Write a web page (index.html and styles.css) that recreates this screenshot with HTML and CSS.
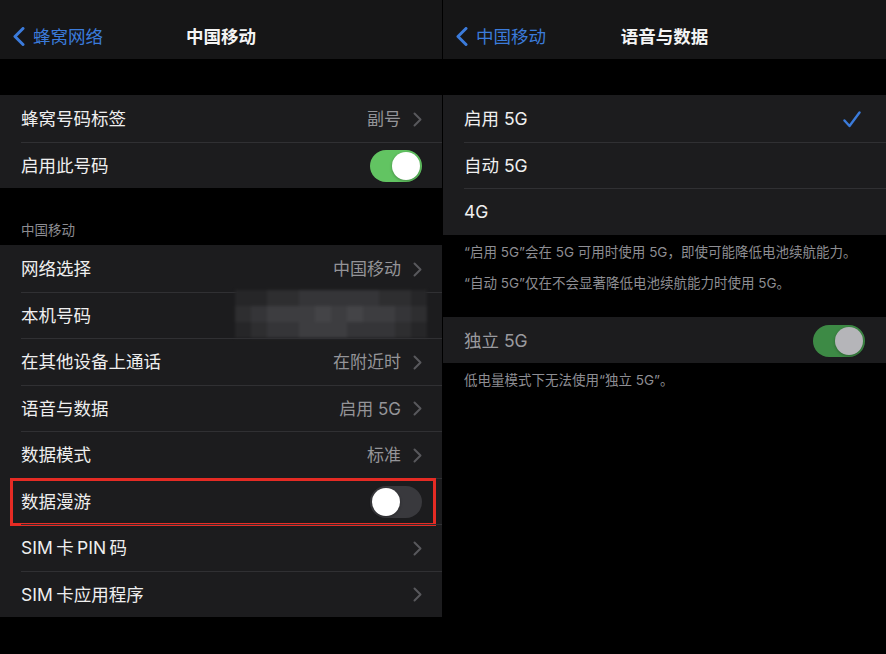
FILE: index.html
```html
<!DOCTYPE html>
<html lang="zh-CN">
<head>
<meta charset="utf-8">
<title>中国移动 / 语音与数据</title>
<link rel="stylesheet" href="styles.css">
</head>
<body>
<div class="screen">
  <section class="panel panel-left">
    <header class="nav">
      <a class="back">
        <svg class="back-chev" width="12" height="19" viewBox="0 0 12 19"><polyline points="10,1.5 2,9.5 10,17.5"/></svg>
        <span>蜂窝网络</span>
      </a>
      <h1 class="title">中国移动</h1>
      <span></span>
    </header>
    <div class="spacer"></div>
    <ul class="group">
      <li class="row"><div class="cell"><span class="label">蜂窝号码标签</span><span class="value">副号</span><svg class="chev" width="9" height="15" viewBox="0 0 9 15"><polyline points="1.5,1.5 7.5,7.5 1.5,13.5"/></svg></div></li>
      <li class="row"><div class="cell"><span class="label">启用此号码</span><span class="toggle on"><span class="knob"></span></span></div></li>
    </ul>
    <div class="section-head">中国移动</div>
    <ul class="group">
      <li class="row"><div class="cell"><span class="label">网络选择</span><span class="value">中国移动</span><svg class="chev" width="9" height="15" viewBox="0 0 9 15"><polyline points="1.5,1.5 7.5,7.5 1.5,13.5"/></svg></div></li>
      <li class="row row-number"><div class="cell"><span class="label">本机号码</span></div>
        <div class="mosaic">
          <i class="t0"></i><i class="t0"></i><i class="t1"></i><i class="t1"></i><i class="t2"></i><i class="t2"></i><i class="t2"></i><i class="t2"></i><i class="t2"></i><i class="t1"></i><i class="t1"></i><i class="t0"></i>
          <i class="t1"></i><i class="t2"></i><i class="t3"></i><i class="t3"></i><i class="t3"></i><i class="t4"></i><i class="t3"></i><i class="t4"></i><i class="t3"></i><i class="t3"></i><i class="t2"></i><i class="t1"></i>
          <i class="t0"></i><i class="t1"></i><i class="t2"></i><i class="t2"></i><i class="t3"></i><i class="t3"></i><i class="t3"></i><i class="t2"></i><i class="t2"></i><i class="t2"></i><i class="t1"></i><i class="t0"></i>
        </div>
      </li>
      <li class="row"><div class="cell"><span class="label">在其他设备上通话</span><span class="value">在附近时</span><svg class="chev" width="9" height="15" viewBox="0 0 9 15"><polyline points="1.5,1.5 7.5,7.5 1.5,13.5"/></svg></div></li>
      <li class="row"><div class="cell"><span class="label">语音与数据</span><span class="value">启用 5G</span><svg class="chev" width="9" height="15" viewBox="0 0 9 15"><polyline points="1.5,1.5 7.5,7.5 1.5,13.5"/></svg></div></li>
      <li class="row"><div class="cell"><span class="label">数据模式</span><span class="value">标准</span><svg class="chev" width="9" height="15" viewBox="0 0 9 15"><polyline points="1.5,1.5 7.5,7.5 1.5,13.5"/></svg></div></li>
      <li class="row row-marked"><div class="cell"><span class="label">数据漫游</span><span class="toggle off"><span class="knob"></span></span></div></li>
      <li class="row"><div class="cell"><span class="label tight">SIM 卡 PIN 码</span><svg class="chev" width="9" height="15" viewBox="0 0 9 15"><polyline points="1.5,1.5 7.5,7.5 1.5,13.5"/></svg></div></li>
      <li class="row"><div class="cell"><span class="label tight">SIM 卡应用程序</span><svg class="chev" width="9" height="15" viewBox="0 0 9 15"><polyline points="1.5,1.5 7.5,7.5 1.5,13.5"/></svg></div></li>
    </ul>
  </section>

  <section class="panel panel-right">
    <header class="nav">
      <a class="back">
        <svg class="back-chev" width="12" height="19" viewBox="0 0 12 19"><polyline points="10,1.5 2,9.5 10,17.5"/></svg>
        <span>中国移动</span>
      </a>
      <h1 class="title">语音与数据</h1>
      <span></span>
    </header>
    <div class="spacer"></div>
    <ul class="group group-right">
      <li class="row"><div class="cell"><span class="label">启用 5G</span><svg class="check" width="18" height="17" viewBox="0 0 18 17"><polyline points="1.5,9.5 6.5,15 16.5,1.5"/></svg></div></li>
      <li class="row"><div class="cell"><span class="label">自动 5G</span></div></li>
      <li class="row"><div class="cell"><span class="label">4G</span></div></li>
    </ul>
    <div class="footer footer-first">
      <p>“启用 5G”会在 5G 可用时使用 5G，即使可能降低电池续航能力。</p>
      <p>“自动 5G”仅在不会显著降低电池续航能力时使用 5G。</p>
    </div>
    <ul class="group group-right">
      <li class="row row-disabled"><div class="cell"><span class="label">独立 5G</span><span class="toggle dim"><span class="knob"></span></span></div></li>
    </ul>
    <div class="footer">
      <p>低电量模式下无法使用“独立 5G”。</p>
    </div>
  </section>
</div>
</body>
</html>
```

FILE: styles.css
```css
* { box-sizing: border-box; }

html, body {
  margin: 0;
  padding: 0;
  background: #000;
}

body {
  font-family: Inter, "Noto Sans CJK SC", sans-serif;
  color: #f2f2f2;
  width: 886px;
  height: 654px;
  overflow: hidden;
}

.screen {
  display: flex;
  gap: 1px;
  height: 654px;
}

.panel {
  display: flex;
  flex-direction: column;
}

.panel-left { width: 442px; }
.panel-right { width: 443px; }

/* nav bar */
.nav {
  height: 59px;
  background: #161617;
  display: grid;
  grid-template-columns: 1fr auto 1fr;
  align-items: center;
  padding-top: 14px;
}

.back {
  display: flex;
  align-items: center;
  gap: 8px;
  padding-left: 13px;
  color: #3b7bdb;
  font-size: 17.5px;
  line-height: 22px;
}

.back-chev polyline {
  fill: none;
  stroke: #3b7bdb;
  stroke-width: 3;
  stroke-linecap: round;
  stroke-linejoin: round;
}

.title {
  margin: 0;
  font-size: 17.5px;
  line-height: 22px;
  font-weight: 600;
  color: #f4f4f4;
}

.spacer { height: 36px; }

/* groups & rows */
.group {
  list-style: none;
  margin: 0;
  padding: 0;
  background: #1c1c1e;
}

.row {
  position: relative;
  height: 46.5px;
  display: flex;
  padding-left: 21px;
}

.cell {
  flex: 1;
  display: flex;
  align-items: center;
  padding-top: 1px;
  padding-right: 20px;
  border-top: 1px solid #303033;
}

.row:first-child .cell { border-top: none; padding-top: 2px; }

.group-right .cell { padding-right: 21px; }

.label {
  flex: 1;
  font-size: 17.5px;
  line-height: 22px;
  color: #efefef;
}

.label.tight { word-spacing: -1.5px; }

.value {
  font-size: 17px;
  line-height: 22px;
  color: #949498;
  margin-right: 12px;
}

.chev polyline {
  fill: none;
  stroke: #58585c;
  stroke-width: 2;
  stroke-linecap: round;
  stroke-linejoin: round;
}

.check { margin-right: 4px; }

.check polyline {
  fill: none;
  stroke: #3b7bdb;
  stroke-width: 2.4;
  stroke-linecap: round;
  stroke-linejoin: round;
}

/* toggles */
.toggle {
  width: 52px;
  height: 32px;
  border-radius: 16px;
  padding: 2px;
  display: flex;
}

.toggle .knob {
  width: 28px;
  height: 28px;
  border-radius: 50%;
  background: #fff;
  box-shadow: 0 1px 3px rgba(0, 0, 0, 0.3);
}

.toggle.on { background: #62c462; justify-content: flex-end; }
.toggle.off { background: #39393d; justify-content: flex-start; }
.toggle.dim { background: #3d8a45; justify-content: flex-end; }
.toggle.dim .knob { background: #b5b5b9; }

.row-disabled .label { color: #9a9a9e; }

/* section header */
.section-head {
  height: 57px;
  display: flex;
  align-items: flex-end;
  padding: 0 21px 7px;
  font-size: 13.5px;
  line-height: 16px;
  color: #8c8c91;
}

/* footers */
.footer {
  padding: 8px 21px 0;
  font-size: 13.5px;
  line-height: 18px;
  color: #8e8e93;
}

.footer p { margin: 0 0 13px; }

.footer-first {
  height: 82px;
}

/* pixelated phone number */
.mosaic {
  position: absolute;
  left: 235px;
  top: -1.5px;
  width: 192px;
  height: 48px;
  display: grid;
  grid-template-columns: repeat(12, 16px);
  grid-template-rows: repeat(3, 16px);
  filter: blur(1.5px);
}

.mosaic i { display: block; }
.mosaic .t0 { background: #262628; }
.mosaic .t1 { background: #2e2e30; }
.mosaic .t2 { background: #353538; }
.mosaic .t3 { background: #3d3d40; }
.mosaic .t4 { background: #444447; }

/* red highlight */
.row-marked::after {
  content: "";
  position: absolute;
  left: 10px;
  right: 6px;
  top: 0;
  bottom: -2px;
  border: 3px solid #e52b24;
}
```
